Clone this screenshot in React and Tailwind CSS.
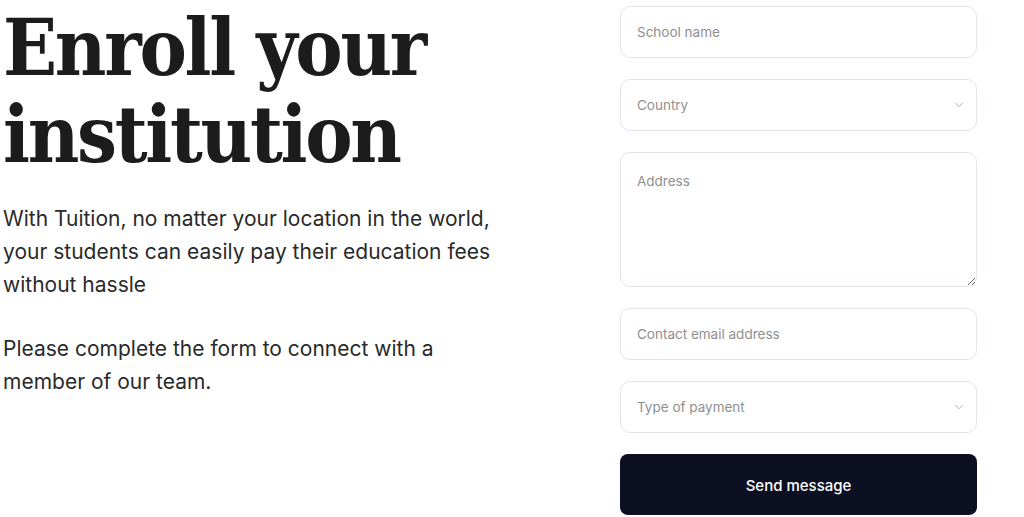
import { ChevronDown } from 'lucide-react';

const fieldBase =
  'w-full h-[52px] shrink-0 rounded-[10px] border border-[#e1e5ec] bg-white px-4 text-[13.5px] outline-none';

const SelectField = ({ label }) => (
  <div className="relative shrink-0">
    <select defaultValue="" className={`${fieldBase} appearance-none text-[#8f8f8f]`}>
      <option value="" disabled>
        {label}
      </option>
    </select>
    <ChevronDown
      size={14}
      strokeWidth={1.4}
      className="pointer-events-none absolute right-[11px] top-1/2 -translate-y-1/2 text-[#9a9a9a]"
    />
  </div>
);

export default function App() {
  return (
    <div
      className="flex h-[517px] w-[1024px] overflow-hidden bg-white"
      style={{ fontFamily: 'Inter, "Liberation Sans", sans-serif' }}
    >
      <div className="w-[620px] pl-[3px] pt-[4px]">
        <h1
          className="font-stretch-condensed text-[79px] font-bold leading-[87px] tracking-[-2.3px] text-[#1c1c1c]"
          style={{ fontFamily: '"DejaVu Serif Condensed", "DejaVu Serif", serif' }}
        >
          Enroll your
          <br />
          institution
        </h1>
        <div className="mt-[24px] text-[21px] leading-[33px] text-[#2a2a2a]">
          <p>
            With Tuition, no matter your location in the world,
            <br />
            your students can easily pay their education fees
            <br />
            without hassle
          </p>
          <p className="mt-[31px]">
            Please complete the form to connect with a
            <br />
            member of our team.
          </p>
        </div>
      </div>

      <form className="flex w-[357px] flex-col gap-[21px] pt-[6px]">
        <input className={`${fieldBase} text-[#333] placeholder:text-[#8f8f8f]`} placeholder="School name" />
        <SelectField label="Country" />
        <textarea
          className={`${fieldBase} h-[135px] resize-y py-[18px] text-[#333] placeholder:text-[#8f8f8f]`}
          placeholder="Address"
        />
        <input
          className={`${fieldBase} text-[#333] placeholder:text-[#8f8f8f]`}
          placeholder="Contact email address"
        />
        <SelectField label="Type of payment" />
        <button
          type="button"
          className="h-[61px] w-full shrink-0 rounded-[8px] bg-[#0d0f22] pt-[3px] text-[15px] font-medium text-white"
        >
          Send message
        </button>
      </form>
    </div>
  );
}
